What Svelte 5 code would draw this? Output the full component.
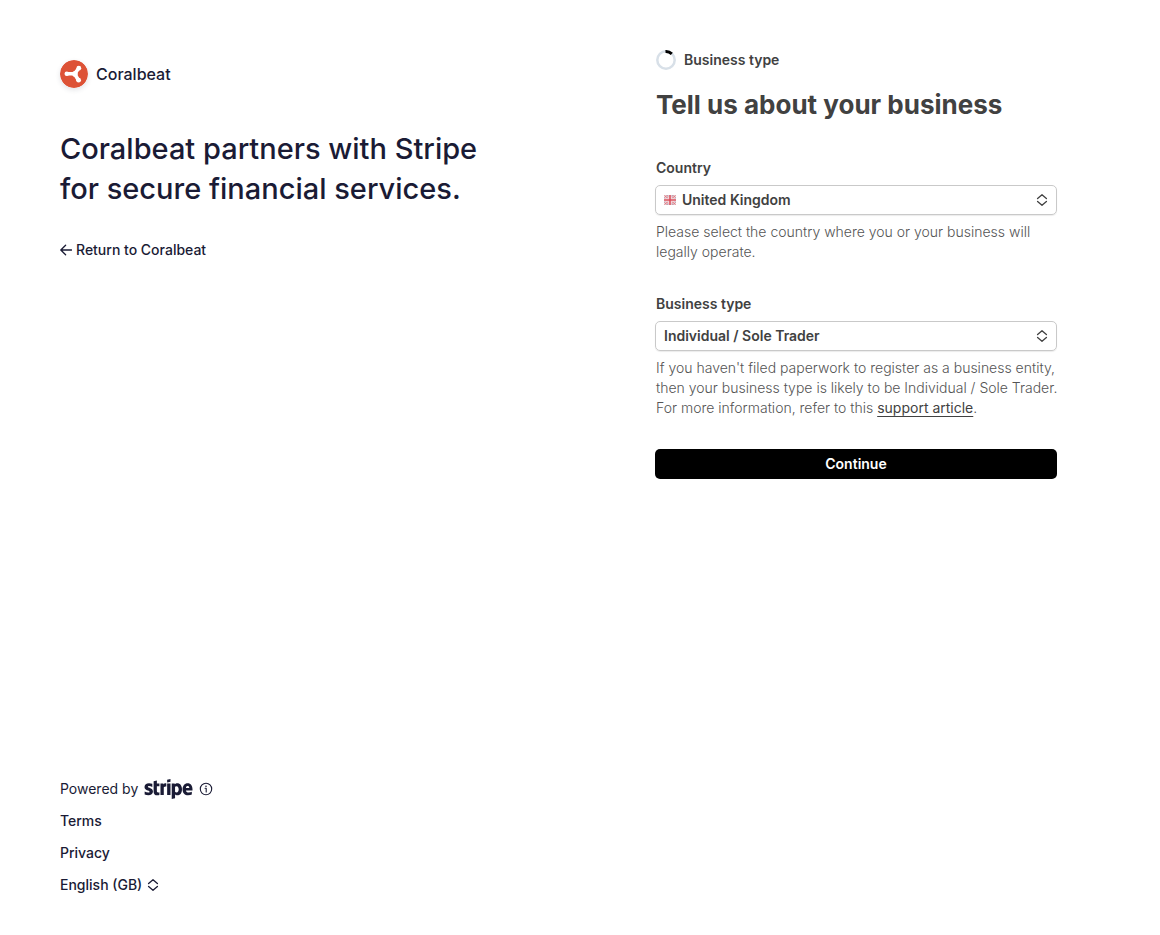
<script>
  let country = $state('gb');
  let business = $state('individual');
  let language = $state('en-GB');
</script>

{#snippet chevrons()}
  <svg class="chevrons" viewBox="0 0 12 12" width="12" height="12" aria-hidden="true">
    <path d="M1.6 4.6 6 .8l4.4 3.8M1.6 7.4 6 11.2l4.4-3.8" />
  </svg>
{/snippet}

<div class="page">
  <aside>
    <header>
      <div class="brand">
        <svg class="logo" viewBox="0 0 28 28" width="28" height="28" aria-hidden="true">
          <circle cx="14" cy="14" r="14" fill="#dd5236" />
          <path d="M7 13.8H14.5L18.6 8.5M14.5 13.8 18.4 20" fill="none" stroke="#fff" stroke-width="3.6" stroke-linecap="round" stroke-linejoin="round" />
          <g fill="#fff">
            <circle cx="6.8" cy="13.8" r="2.3" />
            <circle cx="18.8" cy="8.2" r="2.4" />
            <circle cx="18.6" cy="20.2" r="2.4" />
            <circle cx="15" cy="13.9" r="2.8" />
          </g>
        </svg>
        <span>Coralbeat</span>
      </div>
      <h1>Coralbeat partners with Stripe for secure financial services.</h1>
      <a class="return" href="#return">
        <svg viewBox="0 0 12 12" width="12" height="12" aria-hidden="true">
          <path d="M11.6 6H.9M5.6 1.2.8 6l4.8 4.8" />
        </svg>
        Return to Coralbeat
      </a>
    </header>

    <footer>
      <div class="powered">
        <span>Powered by</span>
        <svg class="stripe" viewBox="54 36 360 150" width="49" height="20" role="img" aria-label="Stripe">
          <path fill-rule="evenodd" d="M414 113.4c0-25.6-12.4-45.8-36.1-45.8-23.8 0-38.2 20.2-38.2 45.6 0 30.1 17 45.3 41.4 45.3 11.9 0 20.9-2.7 27.7-6.5v-20c-6.8 3.4-14.6 5.5-24.5 5.5-9.7 0-18.3-3.4-19.4-15.2h48.9c0-1.3.2-6.5.2-8.9zm-49.4-9.5c0-11.3 6.9-16 13.2-16 6.1 0 12.6 4.7 12.6 16zM301.1 67.6c-9.8 0-16.1 4.6-19.6 7.8l-1.3-6.2h-22v116.6l25-5.3.1-28.3c3.6 2.6 8.9 6.3 17.7 6.3 17.9 0 34.2-14.4 34.2-46.1-.1-29-16.6-44.8-34.1-44.8zm-6 68.9c-5.9 0-9.4-2.1-11.8-4.7l-.1-37.1c2.6-2.9 6.2-4.9 11.9-4.9 9.1 0 15.4 10.2 15.4 23.3 0 13.4-6.2 23.4-15.4 23.4zM223.8 61.7l25.1-5.4V36l-25.1 5.3zM223.8 69.3h25.1v87.5h-25.1zM196.9 76.7l-1.6-7.4h-21.6v87.5h25V97.5c5.9-7.7 15.9-6.3 19-5.2v-23c-3.2-1.2-14.9-3.4-20.8 7.4zM146.9 47.6l-24.4 5.2-.1 80.1c0 14.8 11.1 25.7 25.9 25.7 8.2 0 14.2-1.5 17.5-3.3V135c-3.2 1.3-19 5.9-19-8.9V90.6h19V69.3h-19zM79.3 94.7c0-3.9 3.2-5.4 8.5-5.4 7.6 0 17.2 2.3 24.8 6.4V72.2c-8.3-3.3-16.5-4.6-24.8-4.6C67.5 67.6 54 78.2 54 95.9c0 27.6 38 23.2 38 35.1 0 4.6-4 6.1-9.6 6.1-8.3 0-18.9-3.4-27.3-8v23.8c9.3 4 18.7 5.7 27.3 5.7 20.8 0 35.1-10.3 35.1-28.2-.1-29.8-38.2-24.5-38.2-35.7z" />
        </svg>
        <svg class="info" viewBox="0 0 14 14" width="14" height="14" role="img" aria-label="Information">
          <circle cx="7" cy="7" r="5.7" />
          <path d="M6.1 6.3H7.2V10" />
          <circle class="dot" cx="7" cy="4.2" r=".8" />
        </svg>
      </div>
      <a href="#terms">Terms</a>
      <a href="#privacy">Privacy</a>
      <div class="language">
        <select aria-label="Language" bind:value={language}>
          <option value="en-GB">English (GB)</option>
        </select>
        {@render chevrons()}
      </div>
    </footer>
  </aside>

  <main>
    <form onsubmit={(event) => event.preventDefault()}>
      <div class="step">
        <svg viewBox="0 0 20 20" width="20" height="20" aria-hidden="true">
          <circle cx="10" cy="10" r="8.7" fill="none" stroke="#d8e0e8" stroke-width="2.5" />
          <path d="M9.5 1.6A8.5 8.5 0 0 1 15.8 3.9" fill="none" stroke="#000" stroke-width="3" />
        </svg>
        <span>Business type</span>
      </div>
      <h2>Tell us about your business</h2>

      <div class="field">
        <label for="country">Country</label>
        <div class="control flagged">
          <svg class="flag" viewBox="0 0 12 10" width="12" height="10" aria-hidden="true">
            <rect width="12" height="10" rx="2" fill="#c4a3b0" />
            <path d="M.5.5l11 9M11.5.5l-11 9" stroke="#f6dfe1" stroke-width="2" />
            <path d="M.5.5l11 9M11.5.5l-11 9" stroke="#dd6570" stroke-width="1" />
            <path d="M6 0v10M0 5h12" stroke="#fbeced" stroke-width="3" />
            <path d="M6 0v10M0 5h12" stroke="#d94f5c" stroke-width="1.6" />
          </svg>
          <select id="country" bind:value={country}>
            <option value="gb">United Kingdom</option>
          </select>
          {@render chevrons()}
        </div>
        <p>Please select the country where you or your business will legally operate.</p>
      </div>

      <div class="field">
        <label for="business">Business type</label>
        <div class="control">
          <select id="business" bind:value={business}>
            <option value="individual">Individual / Sole Trader</option>
          </select>
          {@render chevrons()}
        </div>
        <p>
          If you haven't filed paperwork to register as a business entity, then your business type
          is likely to be Individual / Sole Trader. For more information, refer to this
          <a href="#support">support article</a>.
        </p>
      </div>

      <button type="submit">Continue</button>
    </form>
  </main>
</div>

<style>
  :global(body) {
    margin: 0;
    background: #fff;
  }

  .page {
    display: grid;
    grid-template-columns: 1fr 1fr;
    min-height: 100vh;
    box-sizing: border-box;
    font: 400 14px/20px Inter, sans-serif;
    color: #1a1b35;
  }

  aside {
    display: flex;
    flex-direction: column;
    justify-content: space-between;
    padding: 60px 60px 40px;
  }

  .brand {
    display: flex;
    align-items: center;
    gap: 8px;
    font-size: 16px;
    line-height: 28px;
    font-weight: 500;
  }

  .logo {
    border-radius: 50%;
    box-shadow: 0 2px 5px rgb(60 66 87 / 14%);
  }

  h1 {
    max-width: 440px;
    margin: 41px 0 31px;
    font-size: 29px;
    line-height: 40px;
    font-weight: 500;
  }

  a {
    color: inherit;
    text-decoration: none;
  }

  .return {
    display: flex;
    align-items: center;
    gap: 4px;
    font-weight: 500;
  }

  .return svg,
  .chevrons,
  .info {
    fill: none;
    stroke: currentColor;
    stroke-width: 1.3;
    stroke-linecap: round;
    stroke-linejoin: round;
  }

  footer {
    display: flex;
    flex-direction: column;
    align-items: flex-start;
    gap: 12px;
    font-weight: 500;
  }

  .powered {
    display: flex;
    align-items: center;
    gap: 6px;
    font-weight: 400;
  }

  .stripe {
    fill: #1a1b35;
  }

  .info {
    stroke-width: 1.1;
  }

  .info .dot {
    fill: currentColor;
    stroke: none;
  }

  .language {
    display: flex;
    align-items: center;
    gap: 4px;
  }

  select {
    appearance: none;
    margin: 0;
    padding: 0;
    border: 0;
    background: transparent;
    color: inherit;
    font: inherit;
  }

  main {
    padding: 50px 103px 40px 75px;
    color: #414141;
  }

  .step {
    display: flex;
    align-items: center;
    gap: 8px;
    padding-left: 1px;
    font-weight: 600;
  }

  h2 {
    margin: 17px 0 35px;
    padding-left: 1px;
    font-size: 26px;
    line-height: 36px;
    font-weight: 700;
  }

  .field {
    margin-bottom: 31px;
  }

  .field + .field {
    margin-top: 32px;
  }

  label {
    display: block;
    margin-bottom: 7px;
    padding-left: 1px;
    font-weight: 600;
  }

  .control {
    display: grid;
    align-items: center;
    height: 30px;
    box-sizing: border-box;
    border: 1px solid #c9c9c9;
    border-radius: 5px;
    box-shadow: 0 1px 1px rgb(0 0 0 / 8%);
    font-weight: 600;
  }

  .control > * {
    grid-area: 1 / 1;
  }

  .control select {
    width: 100%;
    height: 28px;
    padding: 0 32px 0 8px;
  }

  .flagged select {
    padding-left: 26px;
  }

  .flag {
    margin-left: 8px;
  }

  .control .chevrons {
    justify-self: end;
    margin-right: 8px;
    pointer-events: none;
  }

  p {
    margin: 7px -8px 0 0;
    padding-left: 1px;
    font-weight: 300;
    color: #555;
  }

  p a {
    color: #414141;
    font-weight: 400;
    text-decoration: underline;
    text-underline-offset: 3px;
  }

  button {
    display: block;
    width: 100%;
    height: 30px;
    padding: 0;
    border: 0;
    border-radius: 5px;
    background: #000;
    color: #fff;
    font: inherit;
    font-weight: 600;
    cursor: pointer;
  }
</style>
